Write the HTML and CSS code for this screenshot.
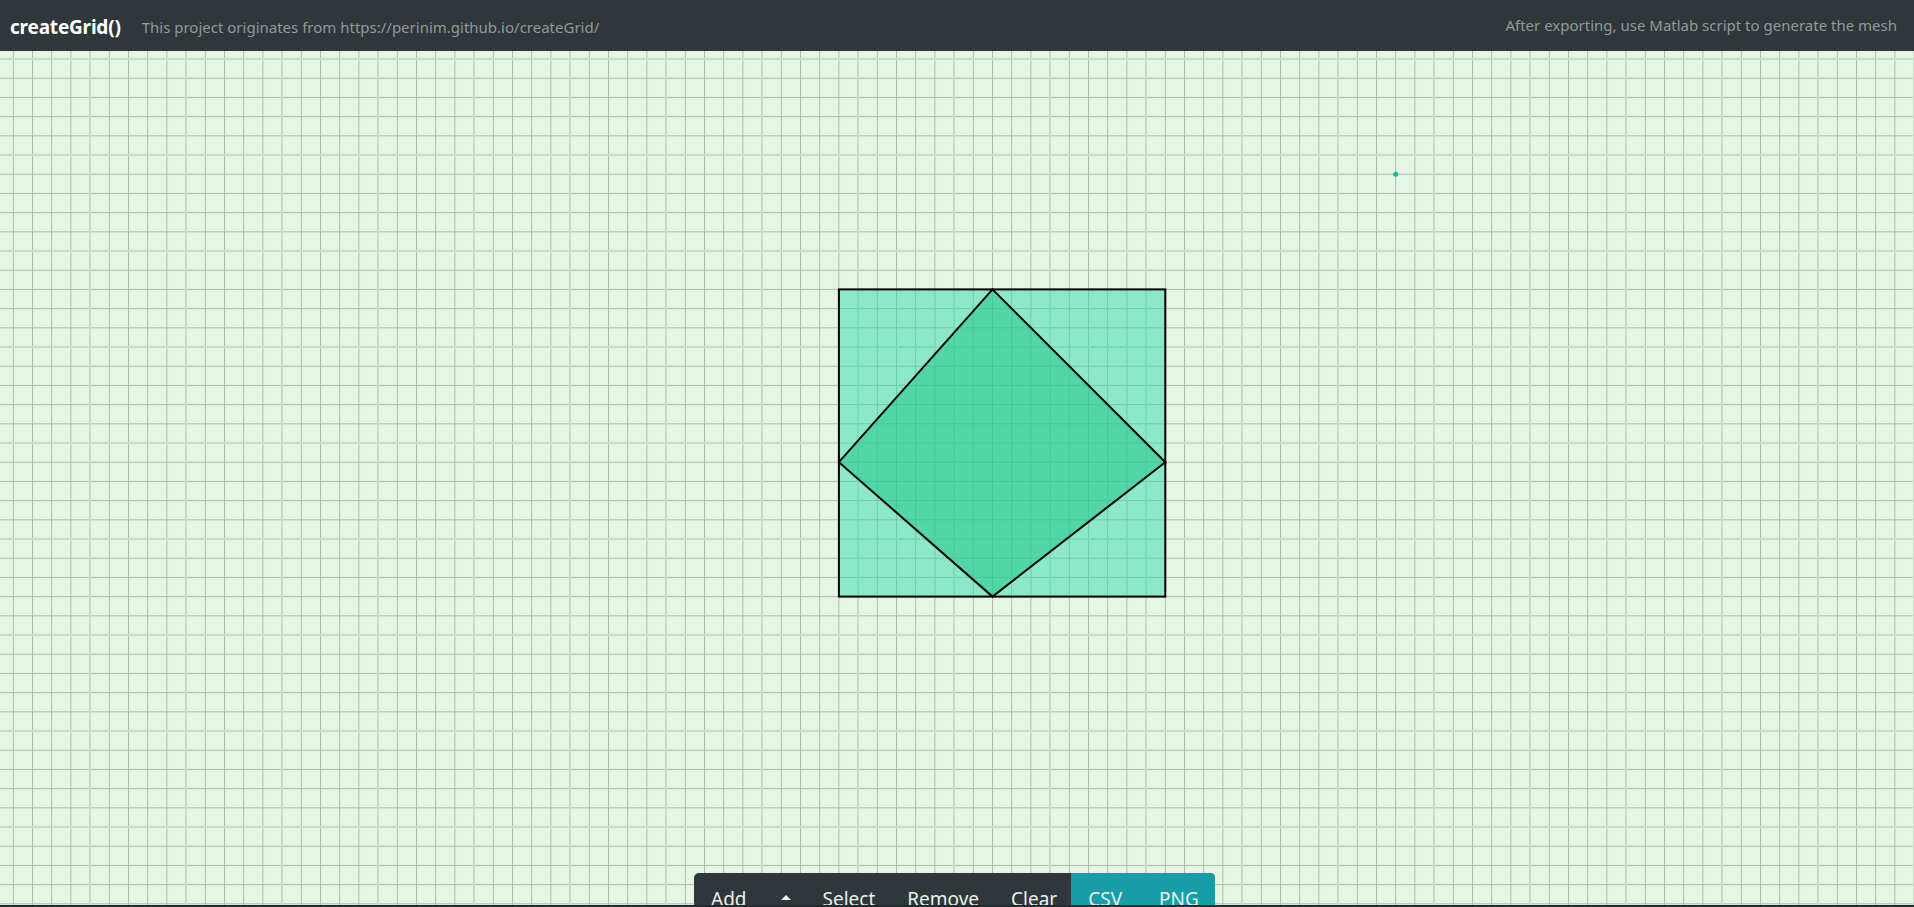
FILE: index.html
```html
<!DOCTYPE html>
<html lang="en">
<head>
<meta charset="utf-8">
<title>createGrid()</title>
<link rel="stylesheet" href="styles.css">
</head>
<body>
<header class="topbar">
  <span class="brand">createGrid()</span>
  <span class="subtitle">This project originates from https://perinim.github.io/createGrid/</span>
  <span class="hint">After exporting, use Matlab script to generate the mesh</span>
</header>
<main class="stage">
  <svg class="canvas" width="1914" height="854" viewBox="0 0 1914 854" xmlns="http://www.w3.org/2000/svg">
    <defs>
      <pattern id="minor" patternUnits="userSpaceOnUse" x="12.8" y="7.5" width="19.2" height="19.2">
        <rect x="0" y="0" width="1" height="19.2" fill="#a9bcac"/>
        <rect x="0" y="0" width="19.2" height="1" fill="#a9bcac"/>
      </pattern>
      <pattern id="major" patternUnits="userSpaceOnUse" x="89" y="7" width="96" height="96">
        <rect x="0" y="0" width="2" height="96" fill="#c9dccc"/>
        <rect x="0" y="0" width="96" height="2" fill="#c9dccc"/>
      </pattern>
    </defs>
    <rect width="1914" height="854" fill="#e5f5e6"/>
    <rect width="1914" height="854" fill="url(#minor)"/>
    <rect width="1914" height="854" fill="url(#major)"/>
    <rect x="838.9" y="238.4" width="326.4" height="307.2" fill="rgb(49,219,170)" fill-opacity="0.5"/>
    <polygon points="992.5,238.4 1165.3,411.2 992.5,545.6 838.9,411.2" fill="rgb(26,196,136)" fill-opacity="0.5"/>
    <rect x="838.9" y="238.4" width="326.4" height="307.2" fill="none" stroke="#000" stroke-width="2"/>
    <polygon points="992.5,238.4 1165.3,411.2 992.5,545.6 838.9,411.2" fill="none" stroke="#000" stroke-width="2" stroke-linejoin="miter"/>
    <circle cx="1395.7" cy="123.2" r="2.5" fill="#17b890"/>
  </svg>
  <nav class="toolbar">
    <div class="group">
      <span class="btn">Add</span>
      <span class="btn caret"><span class="tri"></span></span>
      <span class="btn select">Select</span>
      <span class="btn remove">Remove</span>
      <span class="btn clear">Clear</span>
    </div>
    <div class="group export">
      <span class="btn csv">CSV</span>
      <span class="btn png">PNG</span>
    </div>
  </nav>
</main>
<div class="baseline"></div>
</body>
</html>
```

FILE: styles.css
```css
html, body {
  margin: 0;
  padding: 0;
}
body {
  width: 1914px;
  height: 907px;
  overflow: hidden;
  font-family: "Noto Sans", "Open Sans", sans-serif;
  background: #e5f5e6;
}
.topbar {
  height: 51px;
  background: #2f373a;
  display: flex;
  align-items: center;
  padding: 0 17px 0 10px;
  box-sizing: border-box;
}
.brand {
  color: #ffffff;
  font-weight: 700;
  font-size: 19px;
  letter-spacing: -0.2px;
  margin-top: 2px;
}
.subtitle {
  color: #8e9b98;
  font-size: 15px;
  margin-left: 21px;
  margin-top: 3px;
}
.hint {
  color: #8e9b98;
  font-size: 15px;
  margin-left: auto;
  margin-top: -1px;
}
.stage {
  position: relative;
  height: 854px;
  overflow: hidden;
}
.canvas {
  display: block;
}
.toolbar {
  position: absolute;
  left: 694px;
  top: 822px;
  height: 50px;
  display: flex;
  border-radius: 5px 5px 0 0;
  overflow: hidden;
  background: #2f373a;
}
.group {
  display: flex;
}
.export {
  background: #179da8;
}
.btn {
  color: #e9f1ea;
  font-size: 19px;
  line-height: 26px;
  padding: 13px 17px 0;
}
.caret {
  padding: 13px 15px 0 17px;
  display: flex;
  align-items: flex-start;
}
.select {
  padding-right: 15px;
}
.remove {
  padding-right: 15px;
}
.clear {
  padding-right: 14px;
}
.csv {
  padding-right: 20px;
}
.png {
  padding-right: 16px;
}
.tri {
  display: block;
  width: 0;
  height: 0;
  margin-top: 9px;
  border-left: 5px solid transparent;
  border-right: 5px solid transparent;
  border-bottom: 5px solid #e9f1ea;
}
.baseline {
  height: 2px;
  background: #222b2f;
}
```
